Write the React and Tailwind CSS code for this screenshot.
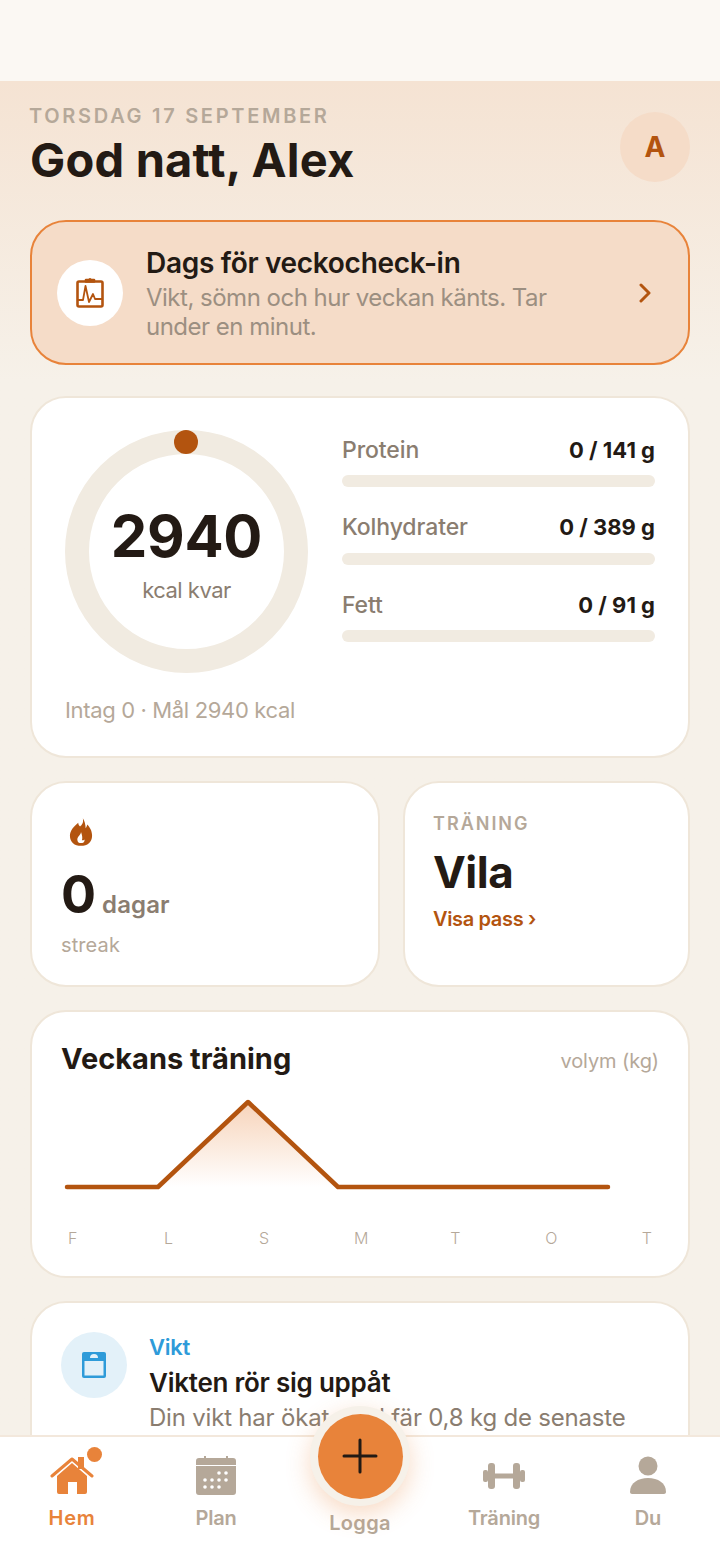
import React from 'react';

function Macro({ label, value }) {
  return (
    <div className="h-[77.5px]">
      <div className="flex items-center justify-between h-[30px]">
        <span className="text-[23px] font-medium text-[#8A7D70] tracking-[-0.1px]">{label}</span>
        <span className="text-[22px] font-bold text-[#231A14]">{value}</span>
      </div>
      <div className="mt-[10px] h-[12px] rounded-full bg-[#F1EBE1]" />
    </div>
  );
}

function NavItem({ label, active, children }) {
  return (
    <div className="w-[144px] flex flex-col items-center">
      <div className="relative h-[50px] w-[60px] flex items-end justify-center">{children}</div>
      <span className={`mt-[8px] text-[20px] font-semibold leading-[28px] ${active ? 'text-[#E8833A] tracking-[0.8px]' : 'text-[#B5A899] tracking-[-0.2px]'}`}>{label}</span>
    </div>
  );
}

export default function App() {
  return (
    <div className="relative w-[720px] h-[1560px] overflow-hidden flex flex-col bg-[#F6F1E9] font-['Inter','Liberation_Sans',sans-serif]">
      <div className="h-[81px] shrink-0 bg-[#FBF8F3]" />

      <div className="flex-1 min-h-0 overflow-hidden bg-gradient-to-b from-[#F5E3D3] to-[#F6F1E9] to-[300px] px-[30px]">
        {/* Header */}
        <div className="flex justify-between pt-[22px] h-[139px]">
          <div>
            <div className="-ml-[1px] text-[20px] leading-[26px] font-semibold tracking-[2.7px] text-[#B5A899]">TORSDAG 17 SEPTEMBER</div>
            <div className="mt-[3px] text-[47px] leading-[56px] font-bold tracking-[0.2px] text-[#231A14]">God natt, Alex</div>
          </div>
          <div className="mt-[9px] w-[70px] h-[70px] rounded-full bg-[#F5DCC8] flex items-center justify-center text-[28px] font-bold text-[#B3540F]">A</div>
        </div>

        {/* Check-in */}
        <div className="h-[145px] rounded-[36px] border-2 border-[#E8833A] bg-[#F5DCC8] flex items-center pl-[25px] pr-[36px]">
          <div className="w-[66px] h-[66px] rounded-full bg-white flex items-center justify-center shrink-0">
            <svg width="28" height="31" viewBox="0 0 28 31" fill="none" stroke="#B3540F" strokeWidth="2.6" strokeLinejoin="round" strokeLinecap="round">
              <rect x="1.500" y="4.500" width="25" height="25" rx="1.500" />
              <path d="M10 4.500V3h8v1.500z" fill="#B3540F" />
              <circle cx="14" cy="2.500" r="1.500" fill="#B3540F" stroke="none" />
              <path d="M2 23h5L9.500 9 13 25l4-8 2 5h7" strokeWidth="1.800" />
            </svg>
          </div>
          <div className="ml-[23px] flex-1">
            <div className="text-[28px] leading-[34px] font-semibold tracking-[-0.3px] text-[#231A14] mt-[1px]">Dags för veckocheck-in</div>
            <div className="mt-[3px] w-[420px] text-[24px] leading-[29px] tracking-[-0.5px] text-[#9C8F81]">Vikt, sömn och hur veckan känts. Tar under en minut.</div>
          </div>
          <svg width="14" height="20" viewBox="0 0 14 20" fill="none" stroke="#B3540F" strokeWidth="3" strokeLinecap="round" strokeLinejoin="round">
            <path d="M3 2l8 8-8 8" />
          </svg>
        </div>

        {/* Calories */}
        <div className="mt-[31px] h-[362px] rounded-[36px] border-2 border-[#EFE6D9] bg-white pl-[33px] pr-[33px] pt-[32px]">
          <div className="flex">
            <div className="relative w-[243px] h-[243px] rounded-full border-[24px] border-[#F1EBE1] flex flex-col items-center justify-center shrink-0">
              <div className="absolute top-[-24px] left-[85px] w-[24px] h-[24px] rounded-full bg-[#B3540F]" />
              <div className="text-[58px] leading-[62px] font-bold tracking-[-0.3px] text-[#231A14] mt-[6px]">2940</div>
              <div className="mt-[9px] text-[22px] leading-[28px] tracking-[-0.5px] text-[#8A7D70]">kcal kvar</div>
            </div>
            <div className="ml-[34px] flex-1 pt-[5px]">
              <Macro label="Protein" value="0 / 141 g" />
              <Macro label="Kolhydrater" value="0 / 389 g" />
              <Macro label="Fett" value="0 / 91 g" />
            </div>
          </div>
          <div className="mt-[22px] text-[22px] leading-[30px] tracking-[-0.35px] text-[#B5A899]">Intag 0 · Mål 2940 kcal</div>
        </div>

        {/* Streak and training */}
        <div className="mt-[23px] flex gap-[23px]">
          <div className="w-[350px] h-[206px] rounded-[36px] border-2 border-[#EFE6D9] bg-white pl-[29px] pt-[33px]">
            <svg className="ml-[8px]" width="24" height="32" viewBox="0 0 26 32">
              <path fill="#B3540F" d="M15 1c1 5-1 7-3 9-1-1-2-2-2-4C5 10 1 15 1 20c0 7 5 11 12 11s12-4 12-11c0-6-3-9-5-12-1 2-1 3-2 4 0-4-1-8-3-11z" />
              <path fill="#fff" d="M13 16c0 3-4 5-4 8 0 3 2 4 4 4s4-1 4-4c-1 1-2 1-3 1 1-3 0-6-1-9z" />
            </svg>
            <div className="mt-[17px] flex items-baseline">
              <span className="text-[52px] leading-[60px] font-bold text-[#231A14]">0</span>
              <span className="ml-[6px] text-[24px] font-semibold tracking-[0.1px] text-[#8A7D70]">dagar</span>
            </div>
            <div className="mt-[6px] text-[20px] leading-[28px] tracking-[0.1px] text-[#B5A899]">streak</div>
          </div>
          <div className="w-[287px] h-[206px] rounded-[36px] border-2 border-[#EFE6D9] bg-white pl-[28px] pt-[29px]">
            <div className="text-[18px] leading-[24px] font-semibold tracking-[2px] text-[#B5A899]">TRÄNING</div>
            <div className="mt-[11px] text-[44px] leading-[50px] font-bold tracking-[-0.5px] text-[#231A14]">Vila</div>
            <div className="mt-[8px] text-[20px] leading-[28px] font-semibold tracking-[-0.35px] text-[#B3540F]">Visa pass ›</div>
          </div>
        </div>

        {/* Week chart */}
        <div className="mt-[23px] h-[268px] rounded-[36px] border-2 border-[#EFE6D9] bg-white px-[30px] pt-[29px]">
          <div className="flex items-start justify-between h-[36px]">
            <span className="-ml-[1px] text-[29px] leading-[36px] font-bold text-[#231A14]">Veckans träning</span>
            <span className="mt-[6px] mr-[-1px] text-[20px] leading-[28px] tracking-[-0.1px] text-[#B5A899]">volym (kg)</span>
          </div>
          <svg className="mt-[18px]" width="600" height="100" viewBox="0 0 600 100" fill="none">
            <defs>
              <linearGradient id="fade" x1="0" y1="0" x2="0" y2="1">
                <stop offset="0" stopColor="#E8833A" stopOpacity="0.35" />
                <stop offset="1" stopColor="#E8833A" stopOpacity="0" />
              </linearGradient>
            </defs>
            <path d="M96 92L186 7l90 85z" fill="url(#fade)" />
            <path d="M5 92H96L186 7l90 85H546" stroke="#B3540F" strokeWidth="4.500" strokeLinecap="round" strokeLinejoin="round" />
          </svg>
          <div className="mt-[33px] flex justify-between px-[5px] text-[16px] leading-[20px] font-light tracking-[0.4px] text-[#B5A899]">
            <span className="w-[12px] text-center">F</span>
            <span className="w-[12px] text-center">L</span>
            <span className="w-[12px] text-center">S</span>
            <span className="w-[12px] text-center">M</span>
            <span className="w-[12px] text-center">T</span>
            <span className="w-[12px] text-center">O</span>
            <span className="w-[12px] text-center">T</span>
          </div>
        </div>

        {/* Insight */}
        <div className="mt-[23px] h-[200px] rounded-[36px] border-2 border-[#EFE6D9] bg-white pl-[29px] pt-[29px] flex">
          <div className="w-[66px] h-[66px] rounded-full bg-[#E3F1F9] flex items-center justify-center shrink-0">
            <svg width="26" height="28" viewBox="0 0 26 28">
              <rect x="1" y="1" width="24" height="26" rx="2" fill="#2E9BD9" />
              <rect x="3.500" y="10" width="19" height="14.500" fill="#E3F1F9" />
              <path d="M9 7a4 4 0 0 1 8 0z" fill="#E3F1F9" />
            </svg>
          </div>
          <div className="ml-[22px]">
            <div className="mt-[1px] text-[22px] leading-[28px] font-semibold tracking-[-0.3px] text-[#2E9BD9]">Vikt</div>
            <div className="mt-[5px] text-[26px] leading-[34px] font-semibold tracking-[-0.25px] text-[#231A14]">Vikten rör sig uppåt</div>
            <div className="mt-[2px] text-[24px] leading-[32px] tracking-[-0.2px] text-[#8A7D70] whitespace-nowrap">Din vikt har ökat med fär 0,8 kg de senaste</div>
          </div>
        </div>
      </div>

      {/* Bottom nav */}
      <div className="h-[125px] shrink-0 bg-white border-t-2 border-[#F3E8DC] flex pt-[9px]">
        <NavItem label="Hem" active>
          <svg width="44" height="40" viewBox="0 0 44 40">
            <path fill="#E8833A" d="M7 20L22 7l15 13v16a2 2 0 0 1-2 2h-8V26H18v12H9a2 2 0 0 1-2-2z" />
            <path fill="#E8833A" d="M28 1h6v12h-6z" />
            <path d="M2 20L22 3l20 17" fill="none" stroke="#E8833A" strokeWidth="3" strokeLinecap="round" strokeLinejoin="round" />
          </svg>
          <span className="absolute top-[1px] right-[0px] w-[15px] h-[15px] rounded-full bg-[#E8833A]" />
        </NavItem>
        <NavItem label="Plan">
          <svg width="40" height="40" viewBox="0 0 40 40">
            <path fill="#B5A899" d="M3 2h34a3 3 0 0 1 3 3v4H0V5a3 3 0 0 1 3-3zM0 10h40v26a3 3 0 0 1-3 3H3a3 3 0 0 1-3-3z" />
            <rect x="8" y="0" width="2" height="4" fill="#B5A899" />
            <rect x="30" y="0" width="2" height="4" fill="#B5A899" />
            <g fill="#fff">
              <circle cx="23" cy="17" r="1.800" /><circle cx="30" cy="17" r="1.800" />
              <circle cx="9" cy="24" r="1.800" /><circle cx="16" cy="24" r="1.800" /><circle cx="23" cy="24" r="1.800" /><circle cx="30" cy="24" r="1.800" />
              <circle cx="9" cy="31" r="1.800" /><circle cx="16" cy="31" r="1.800" /><circle cx="23" cy="31" r="1.800" />
            </g>
          </svg>
        </NavItem>
        <div className="w-[144px] flex flex-col items-center">
          <span className="mt-[63px] text-[20px] font-semibold leading-[28px] tracking-[0.3px] text-[#B5A899]">Logga</span>
        </div>
        <NavItem label="Träning">
          <svg width="42" height="26" viewBox="0 0 42 26" className="mb-[7px]">
            <g fill="#B5A899">
              <rect x="0" y="7" width="5" height="12" rx="2" />
              <rect x="5" y="0" width="7" height="26" rx="3" />
              <rect x="12" y="10.500" width="18" height="5" />
              <rect x="30" y="0" width="7" height="26" rx="3" />
              <rect x="37" y="7" width="5" height="12" rx="2" />
            </g>
          </svg>
        </NavItem>
        <NavItem label="Du">
          <svg width="36" height="40" viewBox="0 0 36 40">
            <circle cx="18" cy="10" r="9.500" fill="#B5A899" />
            <path fill="#B5A899" d="M0 36c0-9 8-14 18-14s18 5 18 14c0 1-1 2-2 2H2c-1 0-2-1-2-2z" />
          </svg>
        </NavItem>
      </div>

      {/* Add button */}
      <div className="absolute left-[310px] top-[1406px] w-[100px] h-[100px] rounded-full bg-[#F6F1E9] flex items-center justify-center shadow-[0_8px_24px_rgba(232,131,58,0.3)]">
        <div className="w-[85px] h-[85px] rounded-full bg-[#E8833A] flex items-center justify-center">
          <svg width="36" height="36" viewBox="0 0 36 36" stroke="#231A14" strokeWidth="3" strokeLinecap="round">
            <path d="M18 2v32M2 18h32" />
          </svg>
        </div>
      </div>
    </div>
  );
}
